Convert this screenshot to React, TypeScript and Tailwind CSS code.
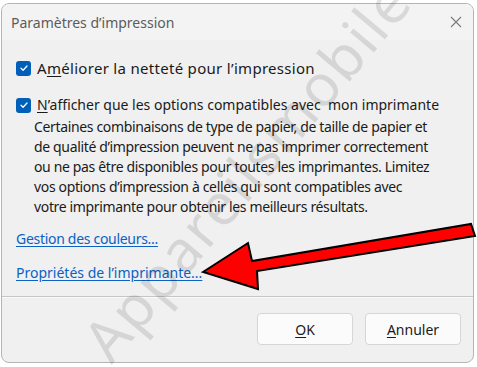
import React from 'react';

const font = { fontFamily: '"Noto Sans", "Open Sans", sans-serif' };

const Check = () => (
  <span className="w-[15px] h-[15px] rounded-[3px] bg-[#005fb8] flex items-center justify-center shrink-0">
    <svg width="10" height="10" viewBox="0 0 10 10" fill="none">
      <path d="M2 5.2 L4.1 7.2 L8 3" stroke="white" strokeWidth="1.3" strokeLinecap="round" strokeLinejoin="round" />
    </svg>
  </span>
);

const Arrow = () => (
  <svg className="absolute left-0 top-0 pointer-events-none" width="477" height="367" viewBox="0 0 477 367">
    <polygon
      points="203,272 248,243 252,261 471,224 475,236 257,271 258,289"
      fill="#ff0000"
      stroke="#000"
      strokeWidth="2"
      strokeLinejoin="miter"
    />
  </svg>
);

const lines = [
  'Certaines combinaisons de type de papier, de taille de papier et',
  'de qualité d’impression peuvent ne pas imprimer correctement',
  'ou ne pas être disponibles pour toutes les imprimantes. Limitez',
  'vos options d’impression à celles qui sont compatibles avec',
  'votre imprimante pour obtenir les meilleurs résultats.',
];

export default function App() {
  return (
    <div className="relative w-[477px] h-[367px] bg-white overflow-hidden" style={font}>
      <div className="ml-[1px] mt-[3px] w-[473px] h-[360px] rounded-[8px] border border-[#b4b4b4] bg-[#f0f0f0] flex flex-col overflow-hidden">
        {/* title bar */}
        <div className="h-[36px] flex items-center justify-between pl-[9px] pr-[11px] bg-[#f3f3f3]">
          <span className="text-[14px] text-[#5c5c5c]">Paramètres d’impression</span>
          <svg width="12" height="12" viewBox="0 0 12 12">
            <path d="M1 1 L11 11 M11 1 L1 11" stroke="#7a7a7a" strokeWidth="1.1" />
          </svg>
        </div>

        {/* body */}
        <div className="flex-1 pl-[14px] leading-[20px] text-[#1a1a1a]">
          <div className="mt-[18px] flex items-center gap-[6px]">
            <Check />
            <span className="text-[15px] tracking-[0.3px]">
              A<span className="underline underline-offset-2">m</span>éliorer la netteté pour l’impression
            </span>
          </div>
          <div className="mt-[17px] flex items-center gap-[6px]">
            <Check />
            <span className="text-[14px]">
              <span className="underline underline-offset-2">N</span>’afficher que les options compatibles avec&nbsp; mon imprimante
            </span>
          </div>
          <p className="mt-[2px] ml-[18px] text-[14px] tracking-[-0.35px]">
            {lines.map((l) => (
              <span key={l} className="block whitespace-nowrap">
                {l}
              </span>
            ))}
          </p>
          <div className="mt-[12px] text-[14px]">
            <span className="text-[#0a62c4] underline underline-offset-2 tracking-[-0.3px]">Gestion des couleurs...</span>
          </div>
          <div className="mt-[14px] text-[14px]">
            <span className="text-[#0a62c4] underline underline-offset-2">Propriétés de l’imprimante...</span>
          </div>
        </div>

        {/* footer */}
        <div className="h-[66px] border-t border-[#c6c6c6] shadow-[inset_0_1px_0_#fafafa] flex items-start justify-end gap-[12px] pt-[16px] pr-[12px]">
          <button className="w-[96px] h-[32px] rounded-[4px] bg-[#fbfbfb] border border-[#d6d6d6] text-[14px] text-[#1a1a1a]">
            <span className="underline underline-offset-2">O</span>K
          </button>
          <button className="w-[96px] h-[32px] rounded-[4px] bg-[#fbfbfb] border border-[#d6d6d6] text-[14px] text-[#1a1a1a]">
            <span className="underline underline-offset-2">A</span>nnuler
          </button>
        </div>
      </div>

      {/* watermark */}
      <div
        className="absolute left-[246px] top-[170px] pointer-events-none text-[58px] tracking-[2px] text-[rgba(0,0,0,0.11)] whitespace-nowrap"
        style={{ transform: 'translate(-50%, -50%) rotate(-50deg)', ...font }}
      >
        Appareilsmobile
      </div>

      <Arrow />
    </div>
  );
}
